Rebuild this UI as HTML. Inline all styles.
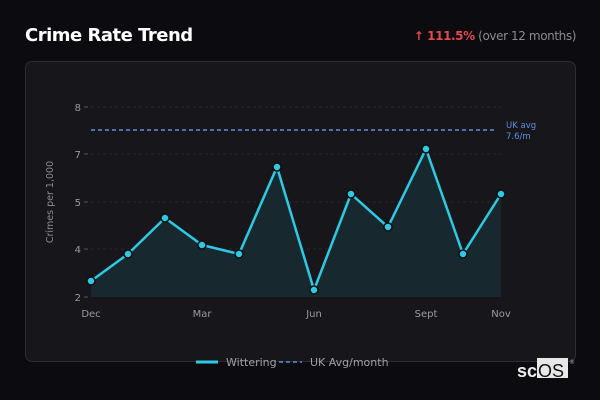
<!DOCTYPE html>
<html><head><meta charset="utf-8"><style>
html,body{margin:0;padding:0;background:#0c0c10;width:600px;height:400px;overflow:hidden;font-family:"DejaVu Sans","Liberation Sans",sans-serif;}
.title{position:absolute;left:25px;top:25px;color:#fff;font-weight:bold;font-size:18px;letter-spacing:-0.5px;}
.chg{position:absolute;right:24px;top:29px;font-size:12px;color:#8a8a90;letter-spacing:-0.4px;}
.chg b{color:#e5484d;}
.card{position:absolute;left:25px;top:61px;width:549px;height:299px;background:#17171b;border:1px solid #2c2c31;border-radius:7px;}
</style></head><body>
<div class="title">Crime Rate Trend</div>
<div class="chg"><b>↑ 111.5%</b> (over 12 months)</div>
<div class="card"></div>
<svg width="600" height="400" style="position:absolute;left:0;top:0" font-family="DejaVu Sans, Liberation Sans, sans-serif">
<g stroke="#26262b" stroke-dasharray="3 3" stroke-width="1">
<line x1="91" y1="107" x2="501" y2="107"/><line x1="91" y1="154" x2="501" y2="154"/><line x1="91" y1="202" x2="501" y2="202"/><line x1="91" y1="249" x2="501" y2="249"/>
</g>
<g stroke="#555" stroke-width="1"><line x1="84" y1="107" x2="88" y2="107"/><line x1="84" y1="154" x2="88" y2="154"/><line x1="84" y1="202" x2="88" y2="202"/><line x1="84" y1="249" x2="88" y2="249"/><line x1="84" y1="297" x2="88" y2="297"/></g>
<g fill="#9a9aa0" font-size="10" text-anchor="end"><text x="81" y="111">8</text><text x="81" y="158">7</text><text x="81" y="206">5</text><text x="81" y="253">4</text><text x="81" y="301">2</text></g>
<text transform="translate(53,202) rotate(-90)" fill="#8a8a90" font-size="9.5" text-anchor="middle">Crimes per 1,000</text>
<polygon fill="#17292f" points="91,297 91,281 128,254 165,218 202,245 239,254 277,167 314,290 351,194 388,227 426,149 463,254 501,194 501,297"/>
<line x1="91" y1="130" x2="497" y2="130" stroke="#5b8fe0" stroke-width="1.5" stroke-dasharray="4 3"/>
<text x="506" y="128" fill="#5b8fe0" font-size="8.5">UK avg</text><text x="506" y="139" fill="#5b8fe0" font-size="8.5">7.6/m</text>
<polyline fill="none" stroke="#2ec9e3" stroke-width="2.5" stroke-linejoin="round" points="91,281 128,254 165,218 202,245 239,254 277,167 314,290 351,194 388,227 426,149 463,254 501,194"/>
<g fill="#2ec9e3" stroke="#0e0e12" stroke-width="1.5">
<circle cx="91" cy="281" r="4"/><circle cx="128" cy="254" r="4"/><circle cx="165" cy="218" r="4"/><circle cx="202" cy="245" r="4"/><circle cx="239" cy="254" r="4"/><circle cx="277" cy="167" r="4"/><circle cx="314" cy="290" r="4"/><circle cx="351" cy="194" r="4"/><circle cx="388" cy="227" r="4"/><circle cx="426" cy="149" r="4"/><circle cx="463" cy="254" r="4"/><circle cx="501" cy="194" r="4"/>
</g>
<g fill="#9a9aa0" font-size="10" text-anchor="middle"><text x="91" y="317">Dec</text><text x="202" y="317">Mar</text><text x="314" y="317">Jun</text><text x="426" y="317">Sept</text><text x="501" y="317">Nov</text></g>
<line x1="196" y1="362" x2="218" y2="362" stroke="#2ec9e3" stroke-width="3"/>
<text x="226" y="366" fill="#a0a0a6" font-size="11">Wittering</text>
<line x1="279" y1="362" x2="302" y2="362" stroke="#5b8fe0" stroke-width="1.5" stroke-dasharray="4 3"/>
<text x="310" y="366" fill="#a0a0a6" font-size="11">UK Avg/month</text>
<rect x="537" y="358" width="31" height="20" fill="#e8e8e8"/>
<text x="517" y="377" fill="#eee" font-size="18" font-weight="bold" font-family="Liberation Sans, sans-serif">sc</text>
<text x="538" y="377" fill="#111" font-size="18" font-family="Liberation Sans, sans-serif">OS</text>
<text x="569" y="364" fill="#aaa" font-size="6">®</text>
</svg>
</body></html>
